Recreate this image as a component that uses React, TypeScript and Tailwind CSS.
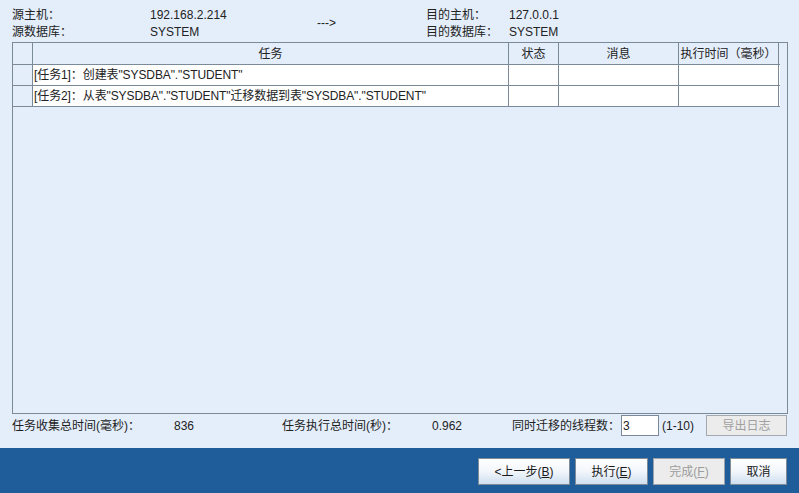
import React from "react";

const font = { fontFamily: '"Liberation Sans", "Noto Sans CJK SC", sans-serif' };

function Btn({ children, w, disabled }: { children: React.ReactNode; w: string; disabled?: boolean }) {
  return (
    <div
      className={
        "h-[27px] flex items-center justify-center text-[12px] border " +
        w +
        (disabled
          ? " bg-[#ececec] border-[#9aa3ab] text-[#9c9c9c]"
          : " bg-gradient-to-b from-[#ffffff] via-[#f2f6fb] to-[#cfdff0] border-[#7f8b97] text-[#1a1a1a]")
      }
    >
      {children}
    </div>
  );
}

export default function App() {
  const rows = [
    '[任务1]：创建表"SYSDBA"."STUDENT"',
    '[任务2]：从表"SYSDBA"."STUDENT"迁移数据到表"SYSDBA"."STUDENT"',
  ];
  return (
    <div className="w-[799px] h-[493px] bg-[#e4eefb] flex flex-col text-[12px] text-[#222]" style={font}>
      <div className="flex pl-[12px] pt-[7px] h-[42px] leading-[17px]">
        <div className="w-[138px] flex flex-col">
          <span>源主机：</span>
          <span>源数据库：</span>
        </div>
        <div className="w-[167px] flex flex-col">
          <span>192.168.2.214</span>
          <span>SYSTEM</span>
        </div>
        <div className="w-[109px] flex items-center pb-[2px]">
          <span>---&gt;</span>
        </div>
        <div className="w-[83px] flex flex-col">
          <span>目的主机：</span>
          <span>目的数据库：</span>
        </div>
        <div className="flex flex-col">
          <span>127.0.0.1</span>
          <span>SYSTEM</span>
        </div>
      </div>
      <div className="ml-[12px] w-[776px] h-[372px] border border-[#7b8a99] bg-[#e4eefb]">
        <div className="w-[767px]">
          <div className="flex h-[22px] border-b border-[#7b8a99]">
            <div className="w-[20px] border-r border-[#7b8a99]" />
            <div className="w-[476px] border-r border-[#7b8a99] flex items-center justify-center">任务</div>
            <div className="w-[50px] border-r border-[#7b8a99] flex items-center justify-center">状态</div>
            <div className="w-[120px] border-r border-[#7b8a99] flex items-center justify-center">消息</div>
            <div className="w-[100px] border-r border-[#7b8a99] flex items-center justify-center">执行时间（毫秒）</div>
          </div>
          {rows.map((r, i) => (
            <div key={i} className="flex h-[21px] border-b border-[#7b8a99] bg-white">
              <div className="w-[20px] border-r border-[#7b8a99] bg-[#e4eefb]" />
              <div className="w-[476px] border-r border-[#7b8a99] flex items-center pl-[1px] whitespace-nowrap overflow-hidden tracking-[-0.1px]">
                {r}
              </div>
              <div className="w-[50px] border-r border-[#7b8a99]" />
              <div className="w-[120px] border-r border-[#7b8a99]" />
              <div className="w-[100px] border-r border-[#7b8a99]" />
            </div>
          ))}
        </div>
      </div>
      <div className="flex items-center h-[23px] pl-[12px]">
        <span className="w-[162px]">任务收集总时间(毫秒)：</span>
        <span className="w-[108px]">836</span>
        <span className="w-[150px]">任务执行总时间(秒)：</span>
        <span className="w-[80px]">0.962</span>
        <span className="w-[109px]">同时迁移的线程数：</span>
        <div className="w-[38px] h-[21px] bg-white border border-[#7b8a99] flex items-center pl-[1px]">3</div>
        <span className="ml-[3px] w-[44px]">(1-10)</span>
        <div className="w-[81px] h-[21px] bg-[#ececec] border border-[#a3a9ae] text-[#a0a0a0] flex items-center justify-center">
          导出日志
        </div>
      </div>
      <div className="mt-[11px] flex-1 bg-[#1e5d9a] flex items-start justify-end pt-[10px] pr-[12px] gap-[5px]">
        <Btn w="w-[92px]">&lt;上一步(<u>B</u>)</Btn>
        <Btn w="w-[73px]">执行(<u>E</u>)</Btn>
        <Btn w="w-[72px]" disabled>完成(<u>F</u>)</Btn>
        <Btn w="w-[57px]">取消</Btn>
      </div>
    </div>
  );
}
